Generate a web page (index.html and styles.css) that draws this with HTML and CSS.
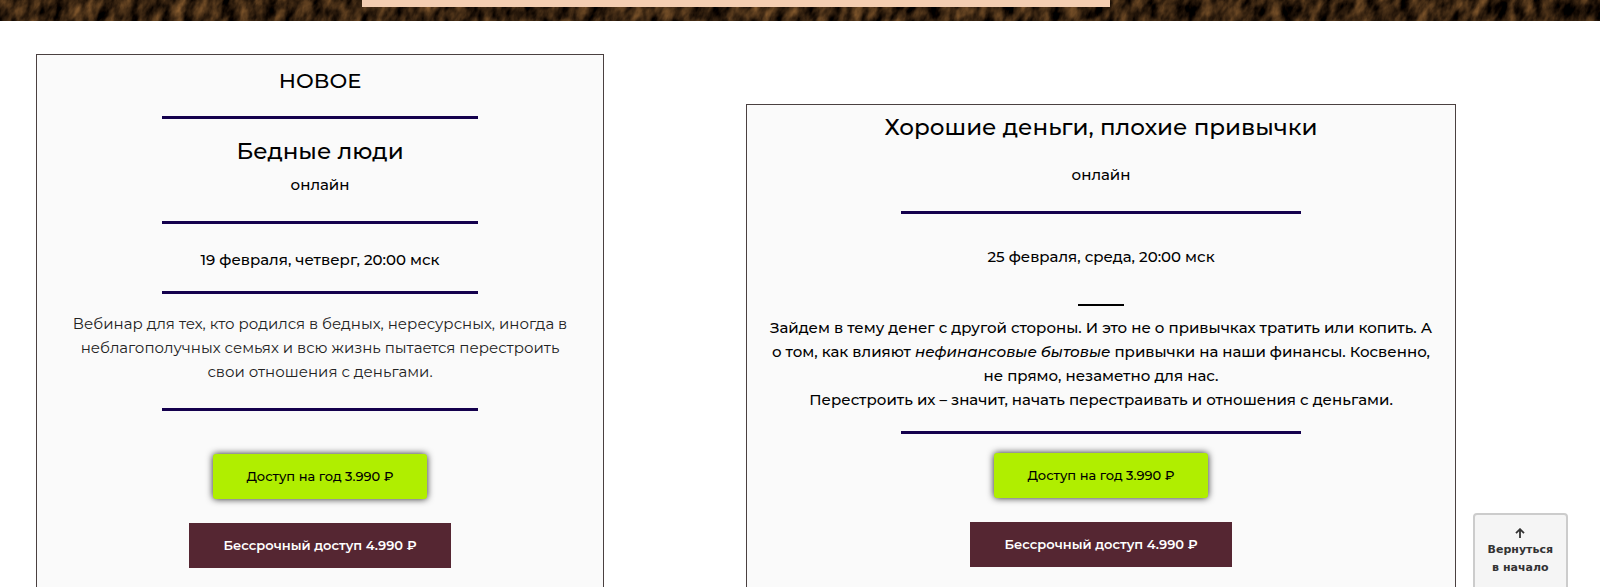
FILE: index.html
```html
<!DOCTYPE html>
<html lang="ru">
<head>
    <meta charset="UTF-8">
    <meta name="viewport" content="width=device-width, initial-scale=1.0">
    <title>Вебинары</title>
    <link rel="stylesheet" href="styles.css">
</head>
<body id="top">
    <header class="banner">
        <svg class="banner-texture" aria-hidden="true">
            <filter id="bark" x="0" y="0" width="100%" height="100%" color-interpolation-filters="sRGB">
                <feTurbulence type="fractalNoise" baseFrequency="0.09 0.05" numOctaves="4" seed="7"/>
                <feColorMatrix type="matrix" values="0.85 0 0 0 -0.22  0.6 0 0 0 -0.17  0.32 0 0 0 -0.1  0 0 0 0 1"/>
            </filter>
            <rect width="110%" height="100%" transform="skewX(-15)" filter="url(#bark)"/>
        </svg>
        <div class="banner-panel"></div>
    </header>

    <main class="webinars">
        <article class="card">
            <p class="label">НОВОЕ</p>
            <hr class="line">
            <h2 class="title">Бедные люди</h2>
            <p class="format">онлайн</p>
            <hr class="line">
            <p class="date">19 февраля, четверг, 20:00 мск</p>
            <hr class="line">
            <p class="text">Вебинар для тех, кто родился в бедных, нересурсных, иногда в неблагополучных семьях и всю жизнь пытается перестроить свои отношения с деньгами.</p>
            <hr class="line">
            <div class="buttons">
                <button type="button" class="btn btn-year">Доступ на год 3.990 ₽</button>
                <button type="button" class="btn btn-forever">Бессрочный доступ 4.990 ₽</button>
            </div>
        </article>

        <article class="card card-wide">
            <h2 class="title">Хорошие деньги, плохие привычки</h2>
            <p class="format">онлайн</p>
            <hr class="line">
            <p class="date">25 февраля, среда, 20:00 мск</p>
            <hr class="dash">
            <p class="text">Зайдем в тему денег с другой стороны. И это не о привычках тратить или копить. А о том, как влияют <em>нефинансовые бытовые</em> привычки на наши финансы. Косвенно, не прямо, незаметно для нас.<br>Перестроить их – значит, начать перестраивать и отношения с деньгами.</p>
            <hr class="line">
            <div class="buttons">
                <button type="button" class="btn btn-year">Доступ на год 3.990 ₽</button>
                <button type="button" class="btn btn-forever">Бессрочный доступ 4.990 ₽</button>
            </div>
        </article>
    </main>

    <a class="to-top" href="#top">
        <svg class="to-top-arrow" viewBox="0 0 10 10" aria-hidden="true">
            <path d="M5 10V1.5M1 5.2L5 1.2L9 5.2" fill="none" stroke="currentColor" stroke-width="1.8"/>
        </svg>
        <span>Вернуться<br>в начало</span>
    </a>
</body>
</html>
```
FILE: styles.css
```css
* {
    box-sizing: border-box;
}
body {
    margin: 0;
    background: #fff;
    color: #000;
    font-family: Montserrat, Inter, sans-serif;
    font-size: 15px;
    line-height: 24px;
}
p, h2, hr {
    margin: 0;
}

/* banner */
.banner {
    display: grid;
    grid-template-rows: 21px;
    background: #2e1c0b;
}
.banner-texture {
    grid-area: 1 / 1;
    width: 100%;
    height: 100%;
}
.banner-panel {
    grid-area: 1 / 1;
    z-index: 1;
    justify-self: center;
    width: 748px;
    max-width: 90%;
    height: 7px;
    margin-right: 8%;
    background: #f4ceb2;
}

/* cards */
.webinars {
    display: grid;
    grid-template-columns: 568fr 710fr;
    column-gap: 142px;
    padding: 33px 144px 0 36px;
}
.card {
    display: flex;
    flex-direction: column;
    align-items: center;
    padding: 11px 24px 24px;
    border: 1px solid #4a4040;
    background: #fafafa;
    text-align: center;
}
.card-wide {
    margin-top: 50px;
    padding: 7px 20px 24px;
}
.label,
.title {
    font-size: 23px;
    line-height: 30px;
    font-weight: 500;
}
.label {
    font-size: 21px;
}
.line {
    width: 61%;
    height: 3px;
    border: 0;
    background: #14004d;
}
.card-wide .line {
    width: 60%;
}
.dash {
    width: 46px;
    height: 2px;
    margin-top: 35px;
    border: 0;
    background: #000;
}
.label + .line {
    margin-top: 20px;
}
.line + .title {
    margin-top: 17px;
}
.format {
    margin-top: 7px;
    font-weight: 500;
}
.card-wide .format {
    margin-top: 21px;
}
.format + .line {
    margin-top: 24px;
}
.date {
    margin-top: 24px;
    font-weight: 500;
}
.card-wide .date {
    margin-top: 31px;
}
.date + .line {
    margin-top: 19px;
}
.text {
    margin-top: 18px;
    color: #222;
}
.card-wide .text {
    margin-top: 10px;
    font-weight: 500;
    color: #000;
}
.text + .line {
    margin-top: 24px;
}
.card-wide .text + .line {
    margin-top: 19px;
}

/* buttons */
.buttons {
    display: flex;
    flex-direction: column;
    align-items: center;
    gap: 24px;
    margin-top: 43px;
}
.card-wide .buttons {
    margin-top: 19px;
}
.btn {
    padding: 12px 34px;
    border: 0;
    font-family: inherit;
    font-size: 13px;
    line-height: 21px;
    cursor: pointer;
}
.btn-year {
    border-radius: 3px;
    background: #b0ee00;
    color: #000;
    font-weight: 500;
    box-shadow: 0 0 7px #222;
}
.btn-forever {
    background: #552632;
    color: #fff;
    font-weight: 600;
}

/* back to top */
.to-top {
    position: fixed;
    right: 32px;
    bottom: -8px;
    display: flex;
    flex-direction: column;
    align-items: center;
    gap: 3px;
    padding: 13px 13px 16px;
    border: 2px solid #ccc;
    border-radius: 4px;
    background: #f5f5f5;
    color: #333;
    font-family: Verdana, "DejaVu Sans", sans-serif;
    font-size: 11px;
    line-height: 18px;
    font-weight: bold;
    text-align: center;
    text-decoration: none;
}
.to-top-arrow {
    width: 10px;
    height: 10px;
}
```
